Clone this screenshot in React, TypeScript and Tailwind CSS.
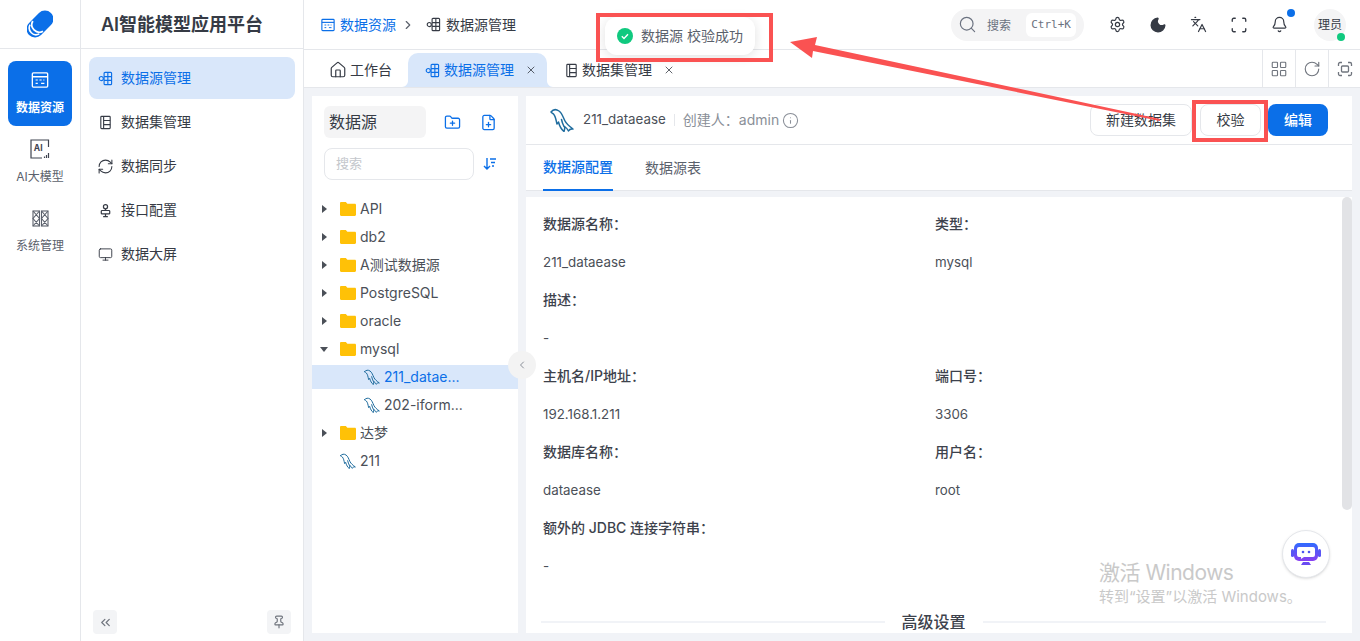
import {
  Bell,
  ChevronLeft,
  ChevronRight,
  ChevronsLeft,
  FilePlus,
  FolderPlus,
  House,
  Info,
  Languages,
  LayoutGrid,
  Monitor,
  Moon,
  Pin,
  RefreshCw,
  RotateCw,
  Scan,
  Search,
  Settings,
  X,
} from 'lucide-react';

const font = { fontFamily: 'Inter, "Noto Sans CJK SC", sans-serif' };

function SourceIcon({ className }: { className?: string }) {
  return (
    <svg viewBox="0 0 16 16" fill="none" stroke="currentColor" strokeWidth="1.2" className={className}>
      <rect x="6.5" y="1.5" width="8" height="13" rx="1" />
      <path d="M10.5 1.5v13M6.5 6h8M6.5 10h8" />
      <circle cx="3.5" cy="8" r="2.2" />
    </svg>
  );
}

function TableIcon({ className }: { className?: string }) {
  return (
    <svg viewBox="0 0 16 16" fill="none" stroke="currentColor" strokeWidth="1.2" className={className}>
      <rect x="3" y="1.5" width="10" height="13" rx="0.8" />
      <path d="M6 1.5v13M6 5.800h7M6 10.200h7" />
    </svg>
  );
}

function DataIcon({ className }: { className?: string }) {
  return (
    <svg viewBox="0 0 16 16" fill="none" stroke="currentColor" strokeWidth="1.3" className={className}>
      <rect x="1" y="1.500" width="14" height="13" rx="1" />
      <path d="M1 5h14" />
      <path d="M4 8h2M7.500 8h2M4 11h2M9 11h3M11 8h1" strokeWidth="1.1" />
    </svg>
  );
}

function ApiIcon({ className }: { className?: string }) {
  return (
    <svg viewBox="0 0 16 16" fill="none" stroke="currentColor" strokeWidth="1.3" className={className}>
      <circle cx="8" cy="4" r="2.200" />
      <rect x="3.500" y="8" width="9" height="3.600" rx="0.800" />
      <path d="M8 6.200V8M8 11.600v3M5.500 14.500h5" />
    </svg>
  );
}

function AiIcon() {
  return (
    <svg viewBox="0 0 20 20" fill="none" className="w-5 h-5 text-[#3f4450]">
      <path d="M18.500 8V1H1V19H12" stroke="currentColor" strokeWidth="1.200" />
      <path d="M14.500 19v-1.500M16.500 19v-3M18.500 19v-5" stroke="currentColor" strokeWidth="1.200" />
      <text x="3.800" y="12" fontSize="8.500" fontWeight="700" fill="currentColor" fontFamily="Inter">AI</text>
    </svg>
  );
}

function SystemIcon() {
  return (
    <svg viewBox="0 0 17 17" fill="none" stroke="#5b616c" strokeWidth="1.100" className="w-[17px] h-[17px]">
      <rect x="1" y="1" width="6.500" height="15" />
      <rect x="9.500" y="1" width="6.500" height="15" />
      <path d="M1 1l6.500 7.500L1 16M7.500 1L1 8.500 7.500 16M9.500 1L16 8.500 9.500 16M16 1L9.500 8.500 16 16" />
    </svg>
  );
}

function Dolphin({ className }: { className?: string }) {
  return (
    <svg viewBox="0 0 24 24" fill="none" stroke="#1f6c9e" strokeWidth="1.500" strokeLinejoin="round" strokeLinecap="round" className={className}>
      <path d="M1 4C3 1.500 6 1 9 3c3 2 4 6 6 10 1.500 3 4 5 8 8-2.500-.5-3.500 0-4.500 2-1-2-2.500-3.500-4-4.500.5 1.500 0 3.500-.5 5-2.500-2-4.500-5.500-5.500-9.500-.5 1-1 1.500-1.500 2-1-4-1.500-8-3.500-10C2.500 5 1.500 5 1 4z" />
      <path d="M14 18.500c-1-2-2-4.500-2.500-7" />
    </svg>
  );
}

function FolderFill() {
  return (
    <svg viewBox="0 0 16 14" className="w-[16px] h-[14px] shrink-0">
      <path d="M0 1.200C0 .6.500 0 1.200 0h4.600l1.600 1.800h7.400c.6 0 1.200.5 1.200 1.200v9.800c0 .7-.6 1.200-1.200 1.200H1.200C.5 14 0 13.500 0 12.800z" fill="#ffc107" />
    </svg>
  );
}

function Caret({ open }: { open?: boolean }) {
  return (
    <span className="w-3 flex justify-center shrink-0">
      {open ? (
        <span className="w-0 h-0 border-x-[4.5px] border-x-transparent border-t-[5px] border-t-[#4b5058]" />
      ) : (
        <span className="w-0 h-0 border-y-[4.5px] border-y-transparent border-l-[5px] border-l-[#4b5058]" />
      )}
    </span>
  );
}

function TreeFolder({ label, open }: { label: string; open?: boolean }) {
  return (
    <div className="h-7 flex items-center pl-[6px] text-sm text-[#4b5058]">
      <Caret open={open} />
      <span className="ml-[10px] mr-[4px]"><FolderFill /></span>
      {label}
    </div>
  );
}

function TreeLeaf({ label, active }: { label: string; active?: boolean }) {
  return (
    <div className="h-7 py-[2px]">
      <div className={`h-6 flex items-center pl-[52px] text-sm ${active ? 'bg-[#d9e7fa] text-[#0b6fe8]' : 'text-[#4b5058]'}`}>
        <Dolphin className="w-4 h-4 mr-1" />
        {label}
      </div>
    </div>
  );
}

function MenuItem({ icon, label, active }: { icon: React.ReactNode; label: string; active?: boolean }) {
  return (
    <div className={`h-[42px] rounded-lg flex items-center gap-2 pl-[9px] text-sm ${active ? 'bg-[#d9e7fa] text-[#0b6fe8]' : 'text-[#363b45]'}`}>
      {icon}
      {label}
    </div>
  );
}

function Field({ label, value }: { label: string; value?: string }) {
  return (
    <div>
      <div className="h-[38px] flex items-center text-sm font-medium text-[#3d424c]">{label}</div>
      {value !== undefined && <div className="h-[38px] pt-[2px] flex items-center text-[13.33px] text-[#4b5058]">{value}</div>}
    </div>
  );
}

export default function App() {
  return (
    <div style={font} className="relative w-[1360px] h-[641px] overflow-hidden flex bg-white text-[#363b45]">
      {/* icon rail */}
      <aside className="w-[81px] shrink-0 border-r border-[#e5e7eb] flex flex-col">
        <div className="h-[49px] border-b border-[#e5e7eb] flex items-center justify-center">
          <svg viewBox="0 0 26 28" className="w-[26px] h-[28px]">
            <g transform="rotate(-45 13 14)">
              <rect x="-2.500" y="5.500" width="31" height="17" rx="8.500" fill="#0b6fe8" />
              <path d="M10 6.800A7.500 7.500 0 0 0 10 21.200" stroke="#fff" strokeWidth="1.800" fill="none" />
              <path d="M5.500 7.500A6.800 6.800 0 0 0 5.500 20.500" stroke="#fff" strokeWidth="1.600" fill="none" />
            </g>
          </svg>
        </div>
        <div className="px-2 pt-3 flex flex-col gap-1">
          <div className="h-[65px] rounded-lg bg-[#0b6fe8] text-white flex flex-col items-center pt-[11px]">
            <DataIcon className="w-4 h-4 scale-[1.1]" />
            <span className="mt-[10px] text-xs font-bold leading-5">数据资源</span>
          </div>
          <div className="h-[65px] flex flex-col items-center pt-[9px] text-[#5b616c]">
            <AiIcon />
            <span className="mt-2 text-xs leading-5">AI大模型</span>
          </div>
          <div className="h-[65px] flex flex-col items-center pt-[9px] text-[#5b616c]">
            <span className="h-5 flex items-center"><SystemIcon /></span>
            <span className="mt-2 text-xs leading-5">系统管理</span>
          </div>
        </div>
      </aside>

      {/* secondary menu */}
      <aside className="w-[223px] shrink-0 border-r border-[#e5e7eb] flex flex-col">
        <div className="h-[49px] border-b border-[#e5e7eb] flex items-center pl-5 pt-[2px] text-lg font-semibold text-[#363b45]">
          AI智能模型应用平台
        </div>
        <nav className="px-2 pt-2 flex flex-col gap-[2px]">
          <MenuItem active icon={<SourceIcon className="w-[15px] h-[15px]" />} label="数据源管理" />
          <MenuItem icon={<TableIcon className="w-[15px] h-[15px]" />} label="数据集管理" />
          <div className="h-[42px] flex items-center gap-[7px] pl-2 text-sm">
            <RefreshCw size={17} strokeWidth={1.5} />
            数据同步
          </div>
          <MenuItem icon={<ApiIcon className="w-[15px] h-[15px]" />} label="接口配置" />
          <MenuItem icon={<Monitor size={15} strokeWidth={1.5} />} label="数据大屏" />
        </nav>
        <div className="mt-auto px-3 pb-[7px] flex justify-between">
          <span className="w-6 h-6 rounded bg-[#f3f4f6] flex items-center justify-center text-[#70757e]"><ChevronsLeft size={15} /></span>
          <span className="w-6 h-6 rounded bg-[#f3f4f6] flex items-center justify-center text-[#70757e]"><Pin size={14} /></span>
        </div>
      </aside>

      {/* main */}
      <main className="flex-1 min-w-0 flex flex-col bg-[#f1f3f7]">
        <header className="h-[50px] shrink-0 bg-white border-b border-[#e5e7eb] flex items-center pl-[17px] pr-[14px] text-sm">
          <DataIcon className="w-[14px] h-[14px] text-[#0b6fe8]" />
          <span className="ml-[5px] text-[#0b6fe8]">数据资源</span>
          <ChevronRight size={14} className="ml-[5px] text-[#5b616c]" />
          <SourceIcon className="ml-[11px] w-[15px] h-[15px]" />
          <span className="ml-[5px]">数据源管理</span>
          <div className="ml-auto w-[133px] h-8 rounded-full bg-[#f4f4f5] flex items-center pl-[7px] pr-2 text-xs text-[#6b7280]">
            <Search size={19} strokeWidth={1.5} />
            <span className="ml-[10px] pt-[2px]">搜索</span>
            <span className="ml-auto h-[24px] px-[5px] pt-[2px] rounded-md bg-white flex items-center text-[11px]" style={{ fontFamily: '"DejaVu Sans Mono", monospace' }}>Ctrl+K</span>
          </div>
          <div className="ml-[25px] flex items-center gap-[23px] text-[#363b45]">
            <Settings size={17} strokeWidth={1.7} />
            <Moon size={18} fill="currentColor" />
            <Languages size={17} strokeWidth={1.7} />
            <Scan size={18} strokeWidth={1.8} />
            <span className="relative">
              <Bell size={17} strokeWidth={1.7} />
              <span className="absolute -top-[7px] -right-[7px] w-2 h-2 rounded-full bg-[#0b6fe8]" />
            </span>
          </div>
          <span className="relative ml-[26px] w-8 h-8 rounded-full bg-[#f4f4f5] flex items-center justify-center text-xs">
            理员
            <span className="absolute right-[1px] bottom-0 w-2 h-2 rounded-full bg-[#10c97f]" />
          </span>
        </header>

        <div className="h-[38px] shrink-0 bg-white border-b border-[#e5e7eb] flex text-sm">
          <div className="flex items-end pl-[11px] flex-1">
            <div className="h-[34px] w-[93px] pl-[14px] flex items-center gap-[3px]">
              <House size={18} strokeWidth={1.6} />
              工作台
            </div>
            <div className="relative h-[34px] w-[139px] rounded-t-[10px] bg-[#d9e7fa] text-[#0b6fe8] flex items-center pl-[17px]">
              <svg viewBox="0 0 6 6" className="absolute -left-[6px] bottom-0 w-[6px] h-[6px]">
                <path d="M6 0v6H0c3 0 6-3 6-6z" fill="#d9e7fa" />
              </svg>
              <svg viewBox="0 0 6 6" className="absolute -right-[6px] bottom-0 w-[6px] h-[6px]">
                <path d="M0 0v6H6C3 6 0 3 0 0z" fill="#d9e7fa" />
              </svg>
              <SourceIcon className="w-[15px] h-[15px]" />
              <span className="ml-[4px]">数据源管理</span>
              <X size={12} strokeWidth={1.6} className="ml-[11px] text-[#363b45]" />
            </div>
            <div className="h-[34px] pl-[17px] flex items-center">
              <TableIcon className="w-[15px] h-[15px]" />
              <span className="ml-[3px]">数据集管理</span>
              <X size={12} strokeWidth={1.6} className="ml-[11px]" />
            </div>
          </div>
          <div className="flex text-[#70757e]">
            <span className="w-[33px] border-l border-[#e5e7eb] flex items-center justify-center"><LayoutGrid size={18} strokeWidth={1.5} /></span>
            <span className="w-[33px] border-l border-[#e5e7eb] flex items-center justify-center"><RotateCw size={18} strokeWidth={1.5} /></span>
            <span className="w-[32px] border-l border-[#e5e7eb] flex items-center justify-center">
              <svg viewBox="0 0 16 16" fill="none" stroke="currentColor" strokeWidth="1.300" className="w-4 h-4">
                <path d="M1.500 5V3a1.500 1.500 0 011.500-1.500h2M11 1.500h2A1.500 1.500 0 0114.500 3v2M14.500 11v2a1.500 1.500 0 01-1.500 1.500h-2M5 14.500H3A1.500 1.500 0 011.500 13v-2" />
                <rect x="4.500" y="5" width="7" height="6" rx="1" />
              </svg>
            </span>
          </div>
        </div>

        <div className="flex-1 min-h-0 flex gap-2 p-2">
          {/* tree */}
          <section className="relative w-[206px] shrink-0 bg-white flex flex-col">
            <div className="pt-[10px] px-3 flex items-center">
              <div className="w-[102px] h-8 rounded-md bg-[#f4f4f5] pl-[5px] flex items-center text-base">数据源</div>
              <FolderPlus size={17} strokeWidth={1.8} className="ml-[18px] text-[#0b6fe8]" />
              <FilePlus size={17} strokeWidth={1.8} className="ml-[19px] text-[#0b6fe8]" />
            </div>
            <div className="mt-[10px] px-3 flex items-center">
              <div className="w-[150px] h-8 rounded-lg border border-[#e5e7eb] pl-[11px] flex items-center text-[13px] text-[#c4c7cc]">搜索</div>
              <svg viewBox="0 0 16 16" fill="none" stroke="#0b6fe8" strokeWidth="1.400" className="ml-[8px] w-4 h-4">
                <path d="M5 2v11M2 10l3 3 3-3M8 3h6M9 6.500h4M10 10h2" />
              </svg>
            </div>
            <div className="mt-[15px]">
              <TreeFolder label="API" />
              <TreeFolder label="db2" />
              <TreeFolder label="A测试数据源" />
              <TreeFolder label="PostgreSQL" />
              <TreeFolder label="oracle" />
              <TreeFolder label="mysql" open />
              <TreeLeaf label="211_datae..." active />
              <TreeLeaf label="202-iform..." />
              <TreeFolder label="达梦" />
              <div className="h-7 flex items-center pl-[28px] text-sm text-[#4b5058]">
                <Dolphin className="w-4 h-4 mr-1" />
                211
              </div>
            </div>
            <span className="absolute right-[-18px] top-[255px] w-7 h-7 rounded-full bg-[#f3f3f3] flex items-center justify-center text-[#8a8f98]">
              <ChevronLeft size={12} />
            </span>
          </section>

          {/* detail */}
          <section className="flex-1 min-w-0 flex flex-col overflow-hidden">
            <div className="bg-white shrink-0">
              <div className="h-[49px] border-b border-[#e5e7eb] flex items-center pl-[24px] pr-[24px] text-sm">
                <Dolphin className="w-6 h-6" />
                <span className="ml-[9px] text-[13.33px] text-[#4b5058]">211_dataease</span>
                <span className="ml-[8px] h-3 border-l border-[#e5e7eb]" />
                <span className="ml-[8px] text-[#8a8f98]">创建人：admin</span>
                <Info size={17} strokeWidth={1.5} className="ml-[3px] text-[#8a8f98]" />
                <div className="ml-auto flex items-center">
                  <span className="w-[102px] h-8 rounded-lg border border-[#e5e7eb] flex items-center justify-center">新建数据集</span>
                  <span className="ml-2 w-[61px] h-8 rounded-lg border border-[#e5e7eb] flex items-center justify-center">校验</span>
                  <span className="ml-[7px] w-[60px] h-8 rounded-lg bg-[#0b6fe8] text-white flex items-center justify-center font-medium">编辑</span>
                </div>
              </div>
              <div className="h-[46px] border-b border-[#e5e7eb] flex pl-[17px] gap-8 text-sm">
                <span className="h-[46px] border-b-2 border-[#0b6fe8] text-[#0b6fe8] font-medium flex items-center">数据源配置</span>
                <span className="h-[46px] flex items-center text-[#5b616c]">数据源表</span>
              </div>
            </div>
            <div className="mt-[6px] flex-1 min-h-0 bg-white flex pt-[8px]">
              <div className="flex-1 min-w-0 pl-[17px] pr-[16px]">
                <div className="grid grid-cols-[392px_1fr]">
                  <Field label="数据源名称：" value="211_dataease" />
                  <Field label="类型：" value="mysql" />
                  <div className="col-span-2"><Field label="描述：" value="-" /></div>
                  <Field label="主机名/IP地址：" value="192.168.1.211" />
                  <Field label="端口号：" value="3306" />
                  <Field label="数据库名称：" value="dataease" />
                  <Field label="用户名：" value="root" />
                  <div className="col-span-2"><Field label="额外的 JDBC 连接字符串：" value="-" /></div>
                </div>
                <div className="mt-[25px] -ml-[2px] flex items-center gap-[17px] text-base font-medium text-[#3d424c]">
                  <span className="flex-1 border-t-2 border-[#f1f3f7]" />
                  高级设置
                  <span className="flex-1 border-t-2 border-[#f1f3f7]" />
                </div>
              </div>
              <div className="-mt-[8px] w-[10px] shrink-0 self-start h-[313px] rounded-full bg-[#e2e3e6]" />
            </div>
          </section>
        </div>
      </main>

      {/* toast */}
      <div className="absolute left-[605px] top-[17px] w-[150px] h-[38px] rounded-xl bg-white shadow-[0_2px_12px_rgba(0,0,0,0.12)] flex items-center pl-3 text-sm text-[#5b616c]">
        <svg viewBox="0 0 16 16" className="w-4 h-4 mr-2">
          <circle cx="8" cy="8" r="8" fill="#10c97f" />
          <path d="M4.800 8.200l2.200 2.200 4-4.200" stroke="#fff" strokeWidth="1.400" fill="none" />
        </svg>
        数据源 校验成功
      </div>

      {/* red annotations */}
      <div className="absolute left-[596px] top-[13px] w-[177px] h-[49px] border-4 border-[#fa5252]" />
      <div className="absolute left-[1192px] top-[100px] w-[76px] h-[42px] border-4 border-[#fa5252]" />
      <svg viewBox="0 0 1360 641" className="absolute inset-0 w-[1360px] h-[641px] pointer-events-none">
        <polygon points="790,42 817,37 815,45 1160,119 1160,121 813,51 812,58" fill="#fa5252" />
      </svg>

      {/* watermark */}
      <div className="absolute left-[1099px] top-[562px] text-[#c9c9c9] leading-none pointer-events-none">
        <div className="text-[21px] tracking-[-0.5px]">激活 Windows</div>
        <div className="mt-[6px] text-[15px]">转到“设置”以激活 Windows。</div>
      </div>

      {/* assistant button */}
      <div className="absolute left-[1282px] top-[530px] w-12 h-12 rounded-full bg-white border border-[#e5e7eb] shadow-sm flex items-center justify-center">
        <svg viewBox="0 0 30 26" className="w-[30px] h-[26px]">
          <defs>
            <linearGradient id="bot" x1="0" y1="0" x2="0" y2="1">
              <stop offset="0" stopColor="#2f6bff" />
              <stop offset="1" stopColor="#8a3ff0" />
            </linearGradient>
          </defs>
          <rect x="0" y="8" width="3" height="8" rx="1.500" fill="#5a55f5" />
          <rect x="27" y="8" width="3" height="8" rx="1.500" fill="#5a55f5" />
          <rect x="3" y="2" width="24" height="18" rx="5" fill="url(#bot)" />
          <path d="M8 6h14a2 2 0 012 2v6a2 2 0 01-2 2h-9l-3 2v-2H8a2 2 0 01-2-2V8a2 2 0 012-2z" fill="#fff" />
          <circle cx="12" cy="11" r="1.300" fill="#4a55f0" />
          <circle cx="18" cy="11" r="1.300" fill="#4a55f0" />
          <path d="M10 24h10l-2-3h-6z" fill="#6a4cf2" />
        </svg>
      </div>
    </div>
  );
}
